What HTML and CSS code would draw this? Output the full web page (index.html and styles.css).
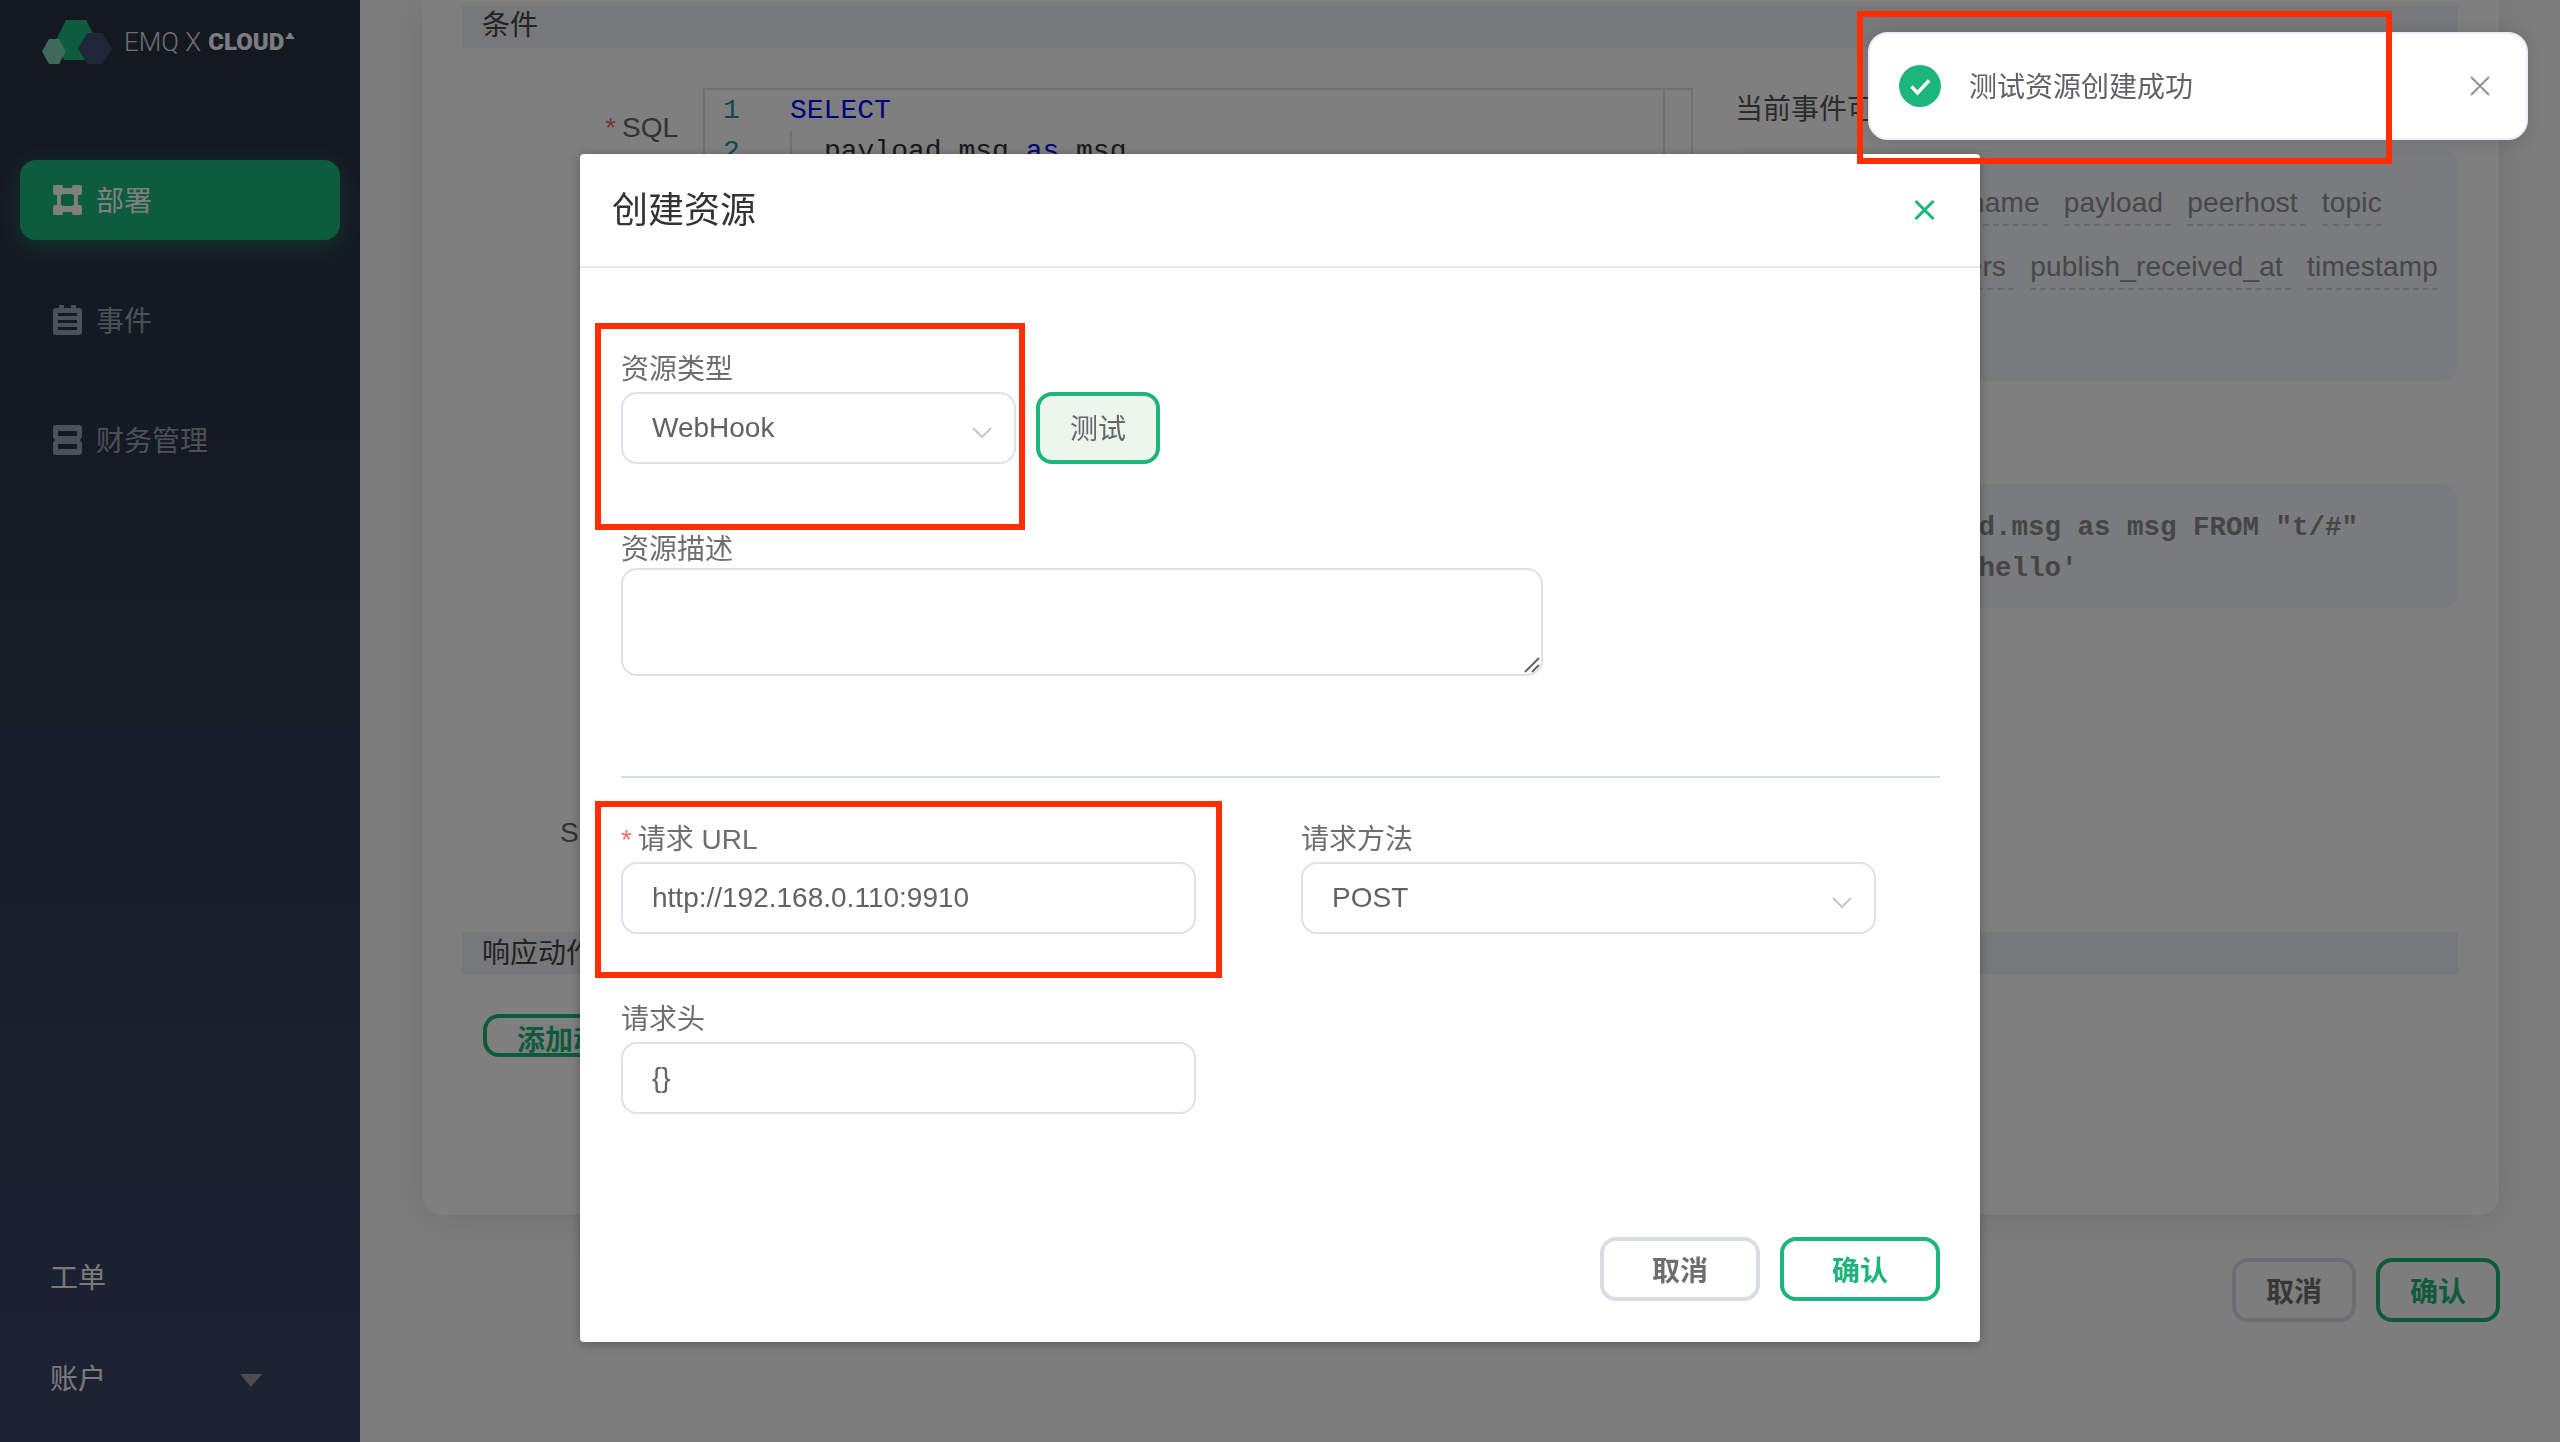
FILE: index.html
```html
<!DOCTYPE html>
<html lang="zh-CN">
<head>
<meta charset="utf-8">
<title>创建资源</title>
<link rel="stylesheet" href="styles.css">
</head>
<body>
<div class="app">
  <aside class="sidebar">
    <div class="logo">
      <svg class="logo-mark" viewBox="0 0 72 44" width="72" height="44">
        <polygon points="14,20 24,0 44,0 58,27 50,40 22,40" fill="#1cb87d"/>
        <polygon points="0,31.500 7,19 17,19 23.700,31.500 17,44 7,44" fill="#7ed4b0"/>
        <polygon points="36,28.500 45.500,13 60.500,13 70,28.500 60.500,44 45.500,44" fill="#3c4c70"/>
      </svg>
      <span class="logo-text">EMQ X</span>
      <span class="logo-strong">CLOUD</span>
      <svg class="logo-cloud" viewBox="0 0 10 8" width="10" height="7"><path d="M0 8 Q0 5 2 5 Q3 0 6 1 Q8 3 8 5 Q10 5 10 8Z" fill="#f6f8fc"/></svg>
    </div>
    <nav class="nav">
      <a class="nav-item active">
        <svg class="nav-icon" viewBox="0 0 29 30"><rect x="0" y="0" width="10" height="10" rx="2"/><rect x="19" y="0" width="10" height="10" rx="2"/><rect x="0" y="20" width="10" height="10" rx="2"/><rect x="19" y="20" width="10" height="10" rx="2"/><path fill-rule="evenodd" d="M4 3H25V27H4ZM8 9V21H21V9Z"/></svg>
        <span>部署</span>
      </a>
      <a class="nav-item">
        <svg class="nav-icon" viewBox="0 0 29 30"><path fill-rule="evenodd" d="M6 0H11V3H18V0H23V3H26Q29 3 29 6V27Q29 30 26 30H3Q0 30 0 27V6Q0 3 3 3H6ZM5 8V11H24V8ZM5 15V18H24V15ZM5 22V25H24V22Z"/></svg>
        <span>事件</span>
      </a>
      <a class="nav-item">
        <svg class="nav-icon" viewBox="0 0 29 30"><path fill-rule="evenodd" d="M3 0H26Q29 0 29 3V12L27 15L29 18V27Q29 30 26 30H3Q0 30 0 27V18L2 15L0 12V3Q0 0 3 0ZM5 6V11H24V6ZM5 19V24H24V19Z"/></svg>
        <span>财务管理</span>
      </a>
    </nav>
    <div class="side-foot">
      <a class="foot-item">工单</a>
      <a class="foot-item foot-account">账户<i class="caret"></i></a>
    </div>
  </aside>

  <main class="main">
    <section class="card">
      <div class="bar">条件</div>
      <div class="sql-row">
        <div class="sql-label"><em class="star">*</em> SQL</div>
        <div class="editor">
          <div class="gutter"><div>1</div><div>2</div></div>
          <div class="code">
            <div><b class="kw">SELECT</b></div>
            <div class="indent">payload.msg <b class="kw">as</b> msg</div>
          </div>
          <div class="minimap"></div>
        </div>
        <div class="side-col">
          <div class="side-title">当前事件可用字段</div>
          <div class="fields">
            <div class="field-row pad-a"><span class="tag">username</span><span class="tag">payload</span><span class="tag">peerhost</span><span class="tag last">topic</span></div>
            <div class="field-row pad-b"><span class="tag">headers</span><span class="tag">publish_received_at</span><span class="tag last">timestamp</span></div>
          </div>
          <div class="sample">SELECT payload.msg as msg FROM "t/#"<br>WHERE msg = 'hello'</div>
        </div>
      </div>
      <div class="sql-test">SQL 测试</div>
      <div class="bar bar-two">响应动作</div>
      <button class="btn add">添加动作</button>
    </section>
    <div class="page-foot">
      <button class="btn dim-cancel">取消</button>
      <button class="btn dim-ok">确认</button>
    </div>
  </main>
</div>

<div class="overlay"></div>

<div class="modal">
  <header class="modal-head">
    <h2 class="modal-title">创建资源</h2>
    <svg class="modal-close" viewBox="0 0 21 20" width="21" height="20"><path d="M1.500 1 19.500 19M19.500 1 1.500 19"/></svg>
  </header>
  <div class="modal-body">
    <div class="field-label">资源类型</div>
    <div class="test-row">
      <div class="control select type-select"><span>WebHook</span><svg class="chev" viewBox="0 0 20 11" width="20" height="11"><path d="M1 1 10 10 19 1"/></svg></div>
      <button class="btn test">测试</button>
    </div>
    <div class="field-label desc-label">资源描述</div>
    <div class="desc-wrap">
      <textarea class="desc"></textarea>
      <svg class="grip" viewBox="0 0 16 16" width="16" height="16"><path d="M1 15 15 1M8 15 15 8"/></svg>
    </div>
    <hr class="divider">
    <div class="grid">
      <div class="cell">
        <div class="field-label"><em class="star">*</em> 请求 URL</div>
        <div class="control">http://192.168.0.110:9910</div>
      </div>
      <div class="cell">
        <div class="field-label">请求方法</div>
        <div class="control select"><span>POST</span><svg class="chev" viewBox="0 0 20 11" width="20" height="11"><path d="M1 1 10 10 19 1"/></svg></div>
      </div>
      <div class="cell">
        <div class="field-label">请求头</div>
        <div class="control">{}</div>
      </div>
    </div>
    <div class="modal-foot">
      <button class="btn cancel">取消</button>
      <button class="btn ok">确认</button>
    </div>
  </div>
</div>

<div class="toast">
  <svg class="toast-icon" viewBox="0 0 42 42" width="42" height="42"><circle cx="21" cy="21" r="21" fill="#1cb57b"/><path d="M12.500 21.500 18.500 28 30 15.500" fill="none" stroke="#fff" stroke-width="3.500"/></svg>
  <span class="toast-text">测试资源创建成功</span>
  <svg class="toast-close" viewBox="0 0 20 20" width="20" height="20"><path d="M1 1 19 19M19 1 1 19"/></svg>
</div>

<div class="mark mark-type"></div>
<div class="mark mark-url"></div>
<div class="mark mark-toast"></div>
</body>
</html>
```
FILE: styles.css
```css
* { box-sizing: border-box; }
html, body { margin: 0; height: 100%; overflow: hidden; }
body {
  font-family: "Liberation Sans", "Noto Sans CJK SC", sans-serif;
  font-size: 28px;
  color: #606266;
  background: #fafafa;
}
em { font-style: normal; }
button { font: inherit; }

.app { display: flex; width: 2560px; height: 1442px; }

/* sidebar */
.sidebar {
  width: 360px;
  flex: none;
  display: flex;
  flex-direction: column;
  padding-top: 20px;
  background: linear-gradient(180deg, #283040 0%, #2c3448 35%, #3c4668 100%);
}
.logo { display: flex; align-items: center; height: 44px; padding-left: 42px; position: relative; }
.logo-mark { flex: none; }
.logo-text { margin-left: 10px; font: 300 26px Roboto, sans-serif; color: #dcdee4; }
.logo-strong { margin-left: 7px; font: 900 24px Roboto, sans-serif; color: #f6f8fc; }
.logo-cloud { margin: -14px 0 0 1px; }
.nav { display: flex; flex-direction: column; gap: 40px; margin: 96px 20px 0; }
.nav-item {
  display: flex;
  align-items: center;
  gap: 14px;
  height: 80px;
  padding-left: 33px;
  border-radius: 16px;
  color: #9aa0ae;
}
.nav-item span { margin-top: -3px; }
.nav-item.active {
  background: #1cb87d;
  color: #fff;
  box-shadow: 0 6px 24px rgba(28, 184, 125, .45);
}
.nav-icon { width: 29px; height: 30px; fill: currentColor; flex: none; }
.side-foot { margin-top: auto; padding: 0 0 45px 50px; display: flex; flex-direction: column; gap: 61px; }
.foot-item { display: flex; align-items: center; height: 40px; color: #f6f6f6; }
.foot-account { position: relative; }
.caret {
  margin-left: 134px;
  margin-top: 6px;
  width: 0;
  height: 0;
  border-left: 11px solid transparent;
  border-right: 11px solid transparent;
  border-top: 13px solid #9a9ba0;
}

/* dimmed page */
.main { flex: 1; min-width: 0; padding: 0 60px 0 62px; }
.card {
  height: 1215px;
  margin-right: 1px;
  padding: 6px 41px 0 40px;
  background: #fff;
  border-radius: 0 0 20px 20px;
  box-shadow: 0 4px 40px rgba(0, 0, 0, .1);
  color: #666;
}
.bar {
  height: 42px;
  line-height: 40px;
  padding-left: 20px;
  background: #eef0f4;
  color: #444;
}
.bar-two { margin-top: 79px; line-height: 43px; }
.sql-row { display: flex; margin-top: 40px; }
.sql-label { width: 216px; margin-top: 20px; line-height: 40px; text-align: right; flex: none; }
.star { color: #f56c6c; margin-right: -2px; }
.editor {
  display: flex;
  width: 990px;
  height: 420px;
  margin-left: 25px;
  flex: none;
  border: 2px solid #dfe1e5;
  font: 28px/41px "Liberation Mono", monospace;
  color: #333;
}
.gutter { width: 85px; padding-left: 18px; flex: none; color: #2b8ea5; }
.code { flex: 1; }
.code > div:first-child { height: 41px; }
.kw { font-weight: 400; color: #0000ff; }
.indent { padding-left: 32px; border-left: 2px solid #dfe1e5; }
.minimap { width: 28px; flex: none; border-left: 2px solid #dfe1e5; }
.side-col { flex: 1; min-width: 0; margin-left: 42px; }
.side-title { height: 40px; line-height: 43px; color: #555; white-space: nowrap; }
.fields {
  height: 232px;
  margin-top: 21px;
  padding-top: 32px;
  border-radius: 16px;
  background: #f5f6f9;
}
.field-row { display: flex; justify-content: flex-end; gap: 16px; height: 45px; margin-bottom: 19px; }
.pad-a { padding-right: 76px; }
.pad-b { padding-right: 20px; }
.tag {
  padding-right: 8px;
  line-height: 44px;
  letter-spacing: .2px;
  border-bottom: 2px dashed #cfd2d8;
  color: #8e8e93;
  white-space: nowrap;
}
.tag.last { padding-right: 0; }
.sample {
  height: 124px;
  margin-top: 103px;
  padding: 23px 0 0 29px;
  border-radius: 16px;
  background: #f5f6f9;
  font: 700 27.500px/41px "Liberation Mono", monospace;
  color: #8a8a8e;
  white-space: nowrap;
}
.sql-test { margin: 205px 0 0 98px; height: 40px; line-height: 40px; }
.add {
  display: block;
  width: 180px;
  height: 43px;
  margin: 40px 0 0 21px;
  padding: 0 0 3px;
  border: 4px solid #1cb57b;
  border-radius: 16px;
  background: #fff;
  color: #1cb57b;
  font-weight: 700;
}
.page-foot { display: flex; justify-content: flex-end; gap: 20px; margin-top: 43px; }
.btn { cursor: pointer; font-weight: 700; }
.dim-cancel, .dim-ok {
  width: 124px;
  height: 64px;
  padding: 0;
  border-radius: 16px;
  background: transparent;
}
.dim-cancel { border: 4px solid #dcdde4; color: #6e6e6e; }
.dim-ok { border: 4px solid #1cb57b; color: #1cb57b; }

.overlay { position: fixed; inset: 0; background: rgba(0, 0, 0, .5); }

/* modal */
.modal {
  position: fixed;
  left: 580px;
  top: 154px;
  width: 1400px;
  height: 1188px;
  background: #fff;
  border-radius: 4px;
  box-shadow: 0 2px 12px rgba(0, 0, 0, .3);
}
.modal-head {
  display: flex;
  align-items: center;
  justify-content: space-between;
  height: 114px;
  padding: 0 45px 0 32px;
  border-bottom: 2px solid #e8e9f0;
}
.modal-title { margin: 0; font-size: 36px; font-weight: 400; line-height: 49px; color: #333; }
.modal-close { fill: none; stroke: #1cb57b; stroke-width: 3; }
.modal-body { padding: 80px 40px 0 41px; }
.field-label { height: 40px; line-height: 43px; margin-bottom: 4px; color: #6e6e70; white-space: nowrap; }
.test-row { display: flex; gap: 20px; }
.control {
  display: flex;
  align-items: center;
  height: 72px;
  padding: 0 22px 0 29px;
  border: 2px solid #dfe1e9;
  border-radius: 16px;
  background: #fff;
  color: #606266;
}
.select { justify-content: space-between; }
.type-select { width: 395px; }
.chev { fill: none; stroke: #c3c6ce; stroke-width: 2; margin-top: 8px; flex: none; }
.test {
  width: 124px;
  height: 72px;
  padding: 0 0 2px;
  border: 4px solid #1cb57b;
  border-radius: 16px;
  background: #ecf6ec;
  color: #666;
  font-weight: 400;
}
.desc-label { margin: 64px 0 0; }
.desc-wrap { position: relative; width: 922px; height: 108px; }
.desc {
  display: block;
  width: 922px;
  height: 108px;
  margin: 0;
  padding: 10px 30px;
  border: 2px solid #dfe1e9;
  border-radius: 16px;
  background: #fff;
  resize: none;
  outline: none;
}
.grip { position: absolute; right: 3px; bottom: 3px; fill: none; stroke: #666; stroke-width: 2; }
.divider { height: 2px; margin: 100px 0 40px; border: 0; background: #d8dde4; }
.grid { display: grid; grid-template-columns: 575px 575px; column-gap: 105px; row-gap: 64px; }
.modal-foot { display: flex; justify-content: flex-end; gap: 20px; margin-top: 123px; }
.cancel, .ok { width: 160px; height: 64px; padding: 0; border-radius: 16px; background: #fff; }
.cancel { border: 4px solid #d9dce5; color: #6e6e6e; }
.ok { border: 4px solid #1cb57b; color: #1cb57b; }

/* toast */
.toast {
  position: fixed;
  left: 1868px;
  top: 32px;
  width: 660px;
  height: 108px;
  display: flex;
  align-items: center;
  padding: 0 36px 0 29px;
  border: 2px solid #ebeef5;
  border-radius: 20px;
  background: #fff;
  box-shadow: 0 2px 20px rgba(0, 0, 0, .12);
}
.toast-text { margin: -3px 0 0 28px; color: #606266; flex: 1; }
.toast-close { fill: none; stroke: #909399; stroke-width: 2; flex: none; }

/* annotation rectangles */
.mark { position: fixed; border: 6px solid #ff2d00; pointer-events: none; }
.mark-type { left: 595px; top: 323px; width: 430px; height: 207px; }
.mark-url { left: 595px; top: 801px; width: 627px; height: 177px; }
.mark-toast { left: 1857px; top: 11px; width: 535px; height: 153px; }
```
